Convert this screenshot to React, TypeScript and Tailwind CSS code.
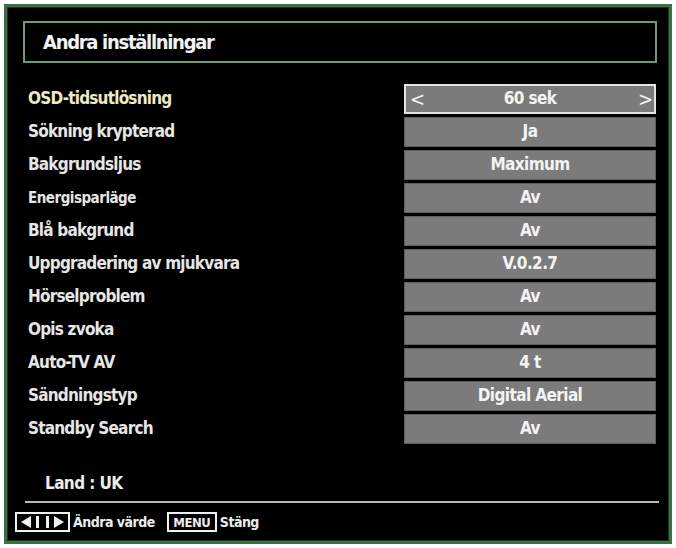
import React from "react";

type Row = { label: string; value: string; small?: boolean };

const rows: Row[] = [
  { label: "OSD-tidsutlösning", value: "60 sek" },
  { label: "Sökning krypterad", value: "Ja" },
  { label: "Bakgrundsljus", value: "Maximum" },
  { label: "Energisparläge", value: "Av", small: true },
  { label: "Blå bakgrund", value: "Av" },
  { label: "Uppgradering av mjukvara", value: "V.0.2.7" },
  { label: "Hörselproblem", value: "Av" },
  { label: "Opis zvoka", value: "Av" },
  { label: "Auto-TV AV", value: "4 t" },
  { label: "Sändningstyp", value: "Digital Aerial" },
  { label: "Standby Search", value: "Av" },
];

const ArrowsKey = () => (
  <svg width="55" height="20" viewBox="0 0 55 20">
    <rect x="1" y="1" width="53" height="18" fill="#000" stroke="#f0f0f0" strokeWidth="2" />
    <polygon points="6,10 16,4 16,16" fill="#f0f0f0" />
    <rect x="21" y="4" width="3" height="12" fill="#f0f0f0" />
    <rect x="31" y="4" width="3" height="12" fill="#f0f0f0" />
    <polygon points="49,10 39,4 39,16" fill="#f0f0f0" />
  </svg>
);

export default function App() {
  return (
    <div className="w-[676px] h-[548px] bg-white p-[4px] font-['DejaVu_Sans',sans-serif] font-stretch-condensed">
      <div className="h-full flex flex-col bg-black border-[3px] border-[#3d6e44] shadow-[inset_0_0_0_1px_#1c3320]">
        <div className="mt-[14px] ml-[16px] mr-[12px] h-[42px] border-2 border-[#6f9a74] flex items-center pl-[18px]">
          <span className="text-[20px] font-bold text-[#f2f2f2] tracking-[-1.3px]">Andra inställningar</span>
        </div>

        <div className="mt-[21px] flex flex-col gap-[3px]">
          {rows.map((r, i) => (
            <div key={r.label} className="flex items-center h-[30px] pl-[21px] pr-[13px]">
              <span
                className={
                  "flex-1 font-bold " +
                  (i === 0 ? "text-[#ecebc4] " : "text-[#e6e6e6] ") +
                  (r.small ? "text-[15px] tracking-[-0.5px]" : "text-[17px] tracking-[-0.8px]")
                }
              >
                {r.label}
              </span>
              <div
                className={
                  "w-[252px] h-[30px] flex items-center justify-between px-[4px] bg-[#7b7b7b] text-[#f4f4f4] font-bold text-[17px] " +
                  (i === 0 ? "border-2 border-[#e4e4e4]" : "border border-[#5e5e5e]")
                }
              >
                <span className="w-[12px] text-[20px] font-normal leading-none">{i === 0 ? "<" : ""}</span>
                <span className="tracking-[-0.6px]">{r.value}</span>
                <span className="w-[12px] text-[20px] font-normal leading-none text-right">{i === 0 ? ">" : ""}</span>
              </div>
            </div>
          ))}
        </div>

        <div className="mt-[27px] pl-[38px] text-[17px] font-bold text-[#ececec] tracking-[-0.6px]">Land : UK</div>

        <div className="mt-[4px] ml-[18px] mr-[10px] h-[2px] bg-[#b8b8b8]" />

        <div className="mt-[9px] ml-[8px] flex items-center text-[14px] font-bold text-[#ececec] tracking-[-0.5px]">
          <ArrowsKey />
          <span className="ml-[3px]">Ändra värde</span>
          <span className="ml-[12px] w-[50px] h-[20px] border-2 border-[#f0f0f0] flex items-center justify-center text-[13px] leading-none">MENU</span>
          <span className="ml-[3px]">Stäng</span>
        </div>
      </div>
    </div>
  );
}
